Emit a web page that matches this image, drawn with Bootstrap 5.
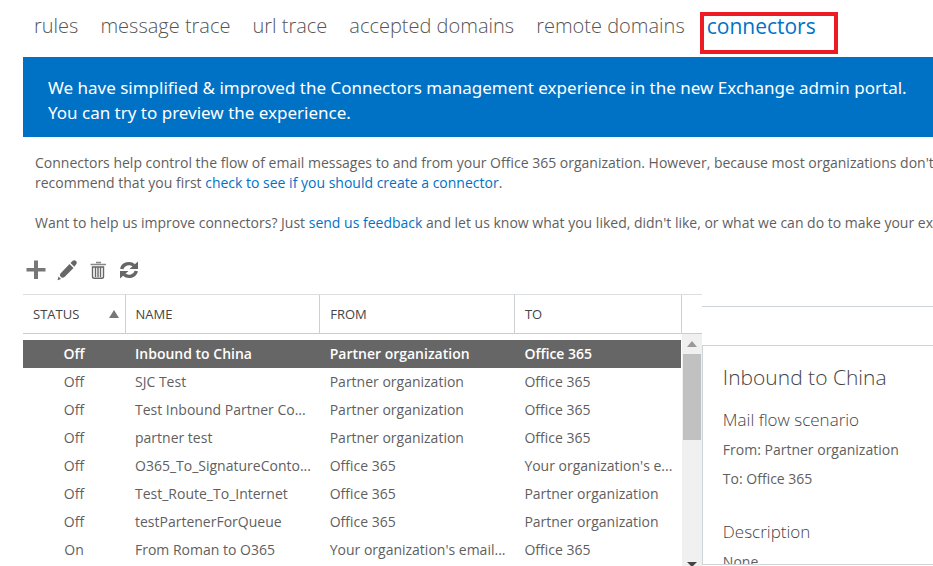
<!DOCTYPE html>
<html lang="en">
<head>
<meta charset="utf-8">
<meta name="viewport" content="width=device-width, initial-scale=1">
<title>Connectors</title>
<link href="https://cdn.jsdelivr.net/npm/bootstrap@5.3.0/dist/css/bootstrap.min.css" rel="stylesheet">
<style>
body { font-family: "Open Sans", "Noto Sans", sans-serif; font-size: 14px; line-height: 20px; color: #5f5f5f; background: #fff; }
a { color: #0072c6; text-decoration: none; }
.page { padding-left: 23px; }
.tabs { gap: 22px; padding: 11px 0 16px 11px; white-space: nowrap; }
.tabs .nav-link { padding: 0; font-size: 20px; line-height: 30px; font-weight: 300; color: #555; }
.tabs .nav-link.active { color: #0072c6; font-weight: 400; font-size: 21px; }
.marker { position: absolute; inset: 1px -22px -13px -7px; border: 4px solid #ed1c24; pointer-events: none; }
.notice { background: #0072c6; color: #fff; font-family: "Noto Sans", "Open Sans", sans-serif; font-size: 17px; line-height: 25px; padding: 18px 0 11px 25px; min-height: 80px; white-space: nowrap; }
.intro { padding: 16px 0 0 12px; white-space: nowrap; }
.intro p { margin-bottom: 20px; }
.tools { gap: 9px; padding: 6px 0 13px 2px; }
.tools .btn { width: 22px; height: 22px; line-height: 0; color: #666; }
.list-pane { flex: 0 0 74.6%; border-top: 1px solid #dcdfe1; }
.grid { table-layout: fixed; color: inherit; white-space: nowrap; }
.grid th, .grid td { overflow: hidden; text-overflow: ellipsis; padding: 0 2px 0 10px; }
.grid th { height: 38px; font-weight: 400; font-size: 13px; color: #444; border-right: 1px solid #ccd0d2; }
.grid thead tr { border-bottom: 1px solid #c5ced2; }
.grid td { height: 28px; }
.grid td:first-child { text-align: center; padding: 0; }
.grid .spacer td { height: 7px; }
.grid .picked td { background: #666; color: #fff; font-weight: 600; }
.c-status { width: 102px; } .c-to { width: 167px; }
.rail-head { height: 39px; border-bottom: 1px solid #c5ced2; }
.rail { width: 20px; }
.rail-track { background: #f0f0f0; padding: 7px 1px 0; }
.rail-thumb { background: #c1c1c1; height: 86px; width: 18px; margin-top: 7px; }
.details-top { height: 39px; margin-top: 12px; border-top: 1px solid #ccd6da; }
.details { border: 1px solid #ccd6da; border-right: 0; padding: 17px 0 0 20px; margin-bottom: 1px; }
.details h1 { font-size: 21px; line-height: 28px; font-weight: 300; margin-bottom: 16px; }
.details h2 { font-size: 17px; line-height: 26px; font-weight: 300; margin-bottom: 7px; }
.details h1, .details h2 { color: #444; }
.details p { margin-bottom: 9px; }
.details section { margin-bottom: 30px; }
</style>
<script defer src="https://cdn.jsdelivr.net/npm/bootstrap@5.3.0/dist/js/bootstrap.bundle.min.js"></script>
</head>
<body>
<div class="page vh-100 d-flex flex-column overflow-hidden">
  <nav class="nav tabs flex-nowrap" aria-label="Mail flow">
    <a class="nav-link" href="#">rules</a>
    <a class="nav-link" href="#">message trace</a>
    <a class="nav-link" href="#">url trace</a>
    <a class="nav-link" href="#">accepted domains</a>
    <a class="nav-link" href="#">remote domains</a>
    <a class="nav-link active position-relative" aria-current="page" href="#">connectors<span class="marker"></span></a>
  </nav>
  <div class="notice" role="status">We have simplified &amp; improved the Connectors management experience in the new Exchange admin portal.<br>You can try to preview the experience.</div>
  <div class="intro">
    <p>Connectors help control the flow of email messages to and from your Office 365 organization. However, because most organizations don't<br>recommend that you first <a href="#">check to see if you should create a connector</a>.</p>
    <p>Want to help us improve connectors? Just <a href="#">send us feedback</a> and let us know what you liked, didn't like, or what we can do to make your ex</p>
  </div>
  <div class="tools d-flex" role="toolbar" aria-label="Connector actions">
    <button class="btn border-0 p-0" type="button" aria-label="New"><svg width="22" height="22" viewBox="0 0 22 22"><path d="M9 1.500h4v7.500h7.500v3.500h-7.500v7.500h-4v-7.500h-7.500v-3.500h7.500z" fill="#777"/></svg></button>
    <button class="btn border-0 p-0" type="button" aria-label="Edit"><svg width="22" height="22" viewBox="0 0 22 22"><g fill="currentColor"><path d="M4.500 14.500 13.500 5l4 4-9 9c-1 .9-2.700 1-3.600 0-1-1-1.300-2.700-.4-3.500zM14.500 4l2-2c1-.9 2.500-.9 3.500 0s1 2.500 0 3.500l-1.700 2.200z"/><path d="M2.500 17.500l2.500 2.500-3.500 1.200z"/></g></svg></button>
    <button class="btn border-0 p-0" type="button" aria-label="Delete"><svg width="22" height="22" viewBox="0 0 22 22"><path d="M9 3.500h5M3.500 5.500h15.500" fill="none" stroke="#888" stroke-width="1.500"/><path d="M5.500 8v9.500q0 1.800 1.800 1.800h7.400q1.800 0 1.800-1.800V8zM8.500 8v10M11 8v10M13.500 8v10" fill="none" stroke="currentColor" stroke-width="1.400"/></svg></button>
    <button class="btn border-0 p-0" type="button" aria-label="Refresh"><svg width="22" height="22" viewBox="0 0 22 22"><path d="M3.700 10A7.300 6.500 0 0 1 16 6.500M18.300 12A7.300 6.500 0 0 1 6 15.500" fill="none" stroke="currentColor" stroke-width="3.400"/><path d="M20 2.500v7.500H11.500zM2 19.500v-7.500H10.500z" fill="currentColor"/></svg></button>
  </div>
  <main class="d-flex flex-grow-1 overflow-hidden">
    <div class="list-pane d-flex overflow-hidden">
      <div class="flex-grow-1 overflow-hidden">
        <table class="grid w-100">
          <colgroup><col class="c-status"><col><col><col class="c-to"></colgroup>
          <thead>
            <tr><th scope="col" aria-sort="ascending"><span class="d-flex justify-content-between align-items-center me-1">STATUS <svg width="10" height="8" viewBox="0 0 10 8"><path d="M5 0l5 8H0z" fill="#777"/></svg></span></th><th scope="col">NAME</th><th scope="col">FROM</th><th scope="col">TO</th></tr>
          </thead>
          <tbody>
            <tr class="spacer" aria-hidden="true"><td colspan="4"></td></tr>
            <tr class="picked" aria-selected="true"><td>Off</td><td>Inbound to China</td><td>Partner organization</td><td>Office 365</td></tr>
            <tr><td>Off</td><td>SJC Test</td><td>Partner organization</td><td>Office 365</td></tr>
            <tr><td>Off</td><td>Test Inbound Partner Co...</td><td>Partner organization</td><td>Office 365</td></tr>
            <tr><td>Off</td><td>partner test</td><td>Partner organization</td><td>Office 365</td></tr>
            <tr><td>Off</td><td>O365_To_SignatureConto...</td><td>Office 365</td><td>Your organization's e...</td></tr>
            <tr><td>Off</td><td>Test_Route_To_Internet</td><td>Office 365</td><td>Partner organization</td></tr>
            <tr><td>Off</td><td>testPartenerForQueue</td><td>Office 365</td><td>Partner organization</td></tr>
            <tr><td>On</td><td>From Roman to O365</td><td>Your organization's email...</td><td>Office 365</td></tr>
          </tbody>
        </table>
      </div>
      <div class="rail d-flex flex-column flex-shrink-0" aria-hidden="true">
        <div class="rail-head"></div>
        <div class="rail-track flex-grow-1 d-flex flex-column align-items-center">
          <svg width="10" height="6" viewBox="0 0 10 6"><path d="M5 0l5 6H0z" fill="#999"/></svg>
          <div class="rail-thumb"></div>
          <svg class="mt-auto" width="10" height="4" viewBox="0 0 10 4"><path d="M0 0h10L6 4H4z" fill="#444"/></svg>
        </div>
      </div>
    </div>
    <div class="flex-grow-1 d-flex flex-column overflow-hidden">
      <div class="details-top flex-shrink-0"></div>
      <div class="details flex-grow-1 overflow-hidden">
        <h1>Inbound to China</h1>
        <section><h2>Mail flow scenario</h2><p>From: Partner organization</p><p>To: Office 365</p></section>
        <section><h2>Description</h2><p>None</p></section>
      </div>
    </div>
  </main>
</div>
</body>
</html>
